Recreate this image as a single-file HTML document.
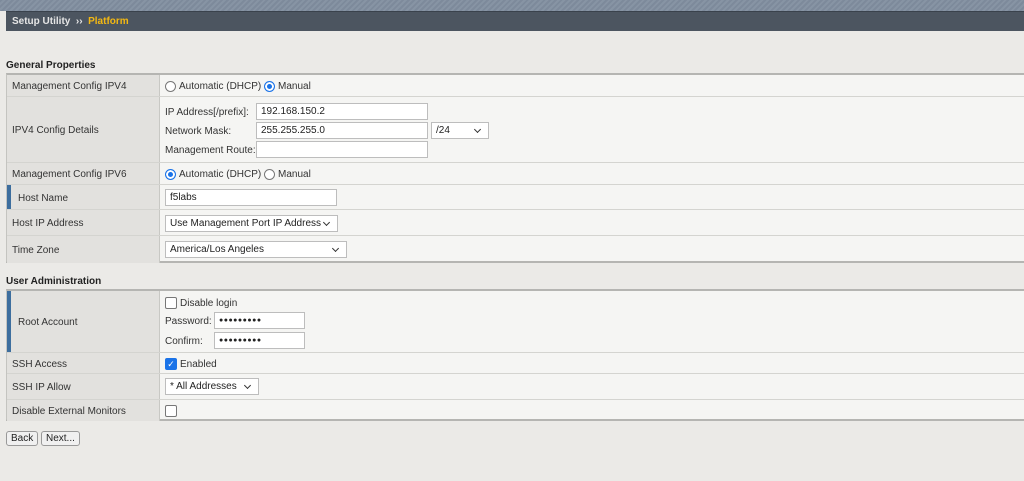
<!DOCTYPE html>
<html><head><style>
*{box-sizing:border-box;margin:0;padding:0}
body{width:1024px;height:481px;background:#ebeae7;font-family:"Liberation Sans",sans-serif;font-size:10px;color:#333;position:relative;overflow:hidden}
.a{position:absolute}
.top{left:0;top:0;width:1024px;height:11px;background:repeating-linear-gradient(135deg,#7d8a9b 0 2px,#8794a4 2px 4px)}
.bar{left:6px;top:11px;width:1018px;height:20px;background:#4c5560;border-top:1px solid #3a424c;color:#e6e6e6;font-weight:bold;font-size:10px;line-height:19px;padding-left:6px}
.bar span{color:#f3b812}
.h{font-weight:bold;color:#222;font-size:10px}
.tbl{left:6px;width:1018px;background:#f5f5f3;border-top:2px solid #b5b5b2;border-bottom:2px solid #b5b5b2;border-left:1px solid #c4c4c0}
.row{position:absolute;left:0;width:1017px;border-bottom:1px solid #d4d4d0}
.row .l{position:absolute;left:0;top:0;bottom:0;width:153px;background:#e2e1de;border-right:1px solid #c8c8c4;padding-left:5px;padding-top:2px;display:flex;align-items:center}
.row .l.m{border-left:4px solid #3d6e9e;padding-left:7px}
.in{position:absolute;background:#fff;border:1px solid #bdbdbd;height:17px;padding-left:4px;padding-top:1px;line-height:14px;color:#222;white-space:nowrap;overflow:hidden}
.sel::after{content:"";position:absolute;right:8px;top:4px;width:4px;height:4px;border-right:1.3px solid #333;border-bottom:1.3px solid #333;transform:rotate(45deg)}
.f{display:flex;align-items:center}
.rad{display:inline-block;width:11px;height:11px;border:1px solid #777;border-radius:50%;background:#fff;margin-right:3px}
.rad.on{border:1px solid #1a73e8;box-shadow:inset 0 0 0 2px #fff;background:#1a73e8}
.cb{display:inline-block;width:12px;height:12px;border:1px solid #777;border-radius:2px;background:#fff;margin-right:3px}
.pw{font-size:7px;letter-spacing:0.5px;line-height:14px}
.btn{position:absolute;top:431px;height:15px;border:1px solid #999;border-radius:3px;background:#f0f0f0;line-height:13px;padding:0 4px;color:#222}
</style></head><body>
<div class="a top"></div>
<div class="a bar">Setup Utility &nbsp;›› &nbsp;<span>Platform</span></div>

<div class="a h" style="left:6px;top:60px">General Properties</div>
<div class="a tbl" style="top:73px;height:190px">
 <div class="row" style="top:0;height:22px"><div class="l">Management Config IPV4</div>
  <div class="a f" style="left:158px;top:6px"><span class="rad"></span>Automatic (DHCP)&nbsp;<span class="rad on"></span>Manual</div></div>
 <div class="row" style="top:22px;height:66px"><div class="l">IPV4 Config Details</div>
  <div class="a" style="left:158px;top:10px">IP Address[/prefix]:</div>
  <div class="in" style="left:249px;top:6px;width:172px">192.168.150.2</div>
  <div class="a" style="left:158px;top:29px">Network Mask:</div>
  <div class="in" style="left:249px;top:25px;width:172px">255.255.255.0</div>
  <div class="in sel" style="left:424px;top:25px;width:58px">/24</div>
  <div class="a" style="left:158px;top:48px">Management Route:</div>
  <div class="in" style="left:249px;top:44px;width:172px"></div></div>
 <div class="row" style="top:88px;height:22px"><div class="l">Management Config IPV6</div>
  <div class="a f" style="left:158px;top:6px"><span class="rad on"></span>Automatic (DHCP)&nbsp;<span class="rad"></span>Manual</div></div>
 <div class="row" style="top:110px;height:25px"><div class="l m">Host Name</div>
  <div class="in" style="left:158px;top:4px;width:172px">f5labs</div></div>
 <div class="row" style="top:135px;height:26px"><div class="l">Host IP Address</div>
  <div class="in sel" style="left:158px;top:5px;width:173px">Use Management Port IP Address</div></div>
 <div class="row" style="top:161px;height:27px;border-bottom:none"><div class="l">Time Zone</div>
  <div class="in sel" style="left:158px;top:5px;width:182px">America/Los Angeles</div></div>
</div>

<div class="a h" style="left:6px;top:276px">User Administration</div>
<div class="a tbl" style="top:289px;height:132px">
 <div class="row" style="top:0;height:62px"><div class="l m">Root Account</div>
  <div class="a f" style="left:158px;top:6px"><span class="cb"></span>Disable login</div>
  <div class="a" style="left:158px;top:25px">Password:</div>
  <div class="in pw" style="left:207px;top:21px;width:91px">●●●●●●●●●</div>
  <div class="a" style="left:158px;top:45px">Confirm:</div>
  <div class="in pw" style="left:207px;top:41px;width:91px">●●●●●●●●●</div></div>
 <div class="row" style="top:62px;height:21px"><div class="l">SSH Access</div>
  <div class="a f" style="left:158px;top:5px"><span class="cb" style="background:#1a73e8;border-color:#1a73e8;color:#fff;font-size:9px;line-height:10px;text-align:center">✓</span>Enabled</div></div>
 <div class="row" style="top:83px;height:26px"><div class="l">SSH IP Allow</div>
  <div class="in sel" style="left:158px;top:4px;width:94px">* All Addresses</div></div>
 <div class="row" style="top:109px;height:21px;border-bottom:none"><div class="l">Disable External Monitors</div>
  <div class="a f" style="left:158px;top:5px"><span class="cb"></span></div></div>
</div>
<div class="btn" style="left:6px">Back</div>
<div class="btn" style="left:41px">Next...</div>
</body></html>
